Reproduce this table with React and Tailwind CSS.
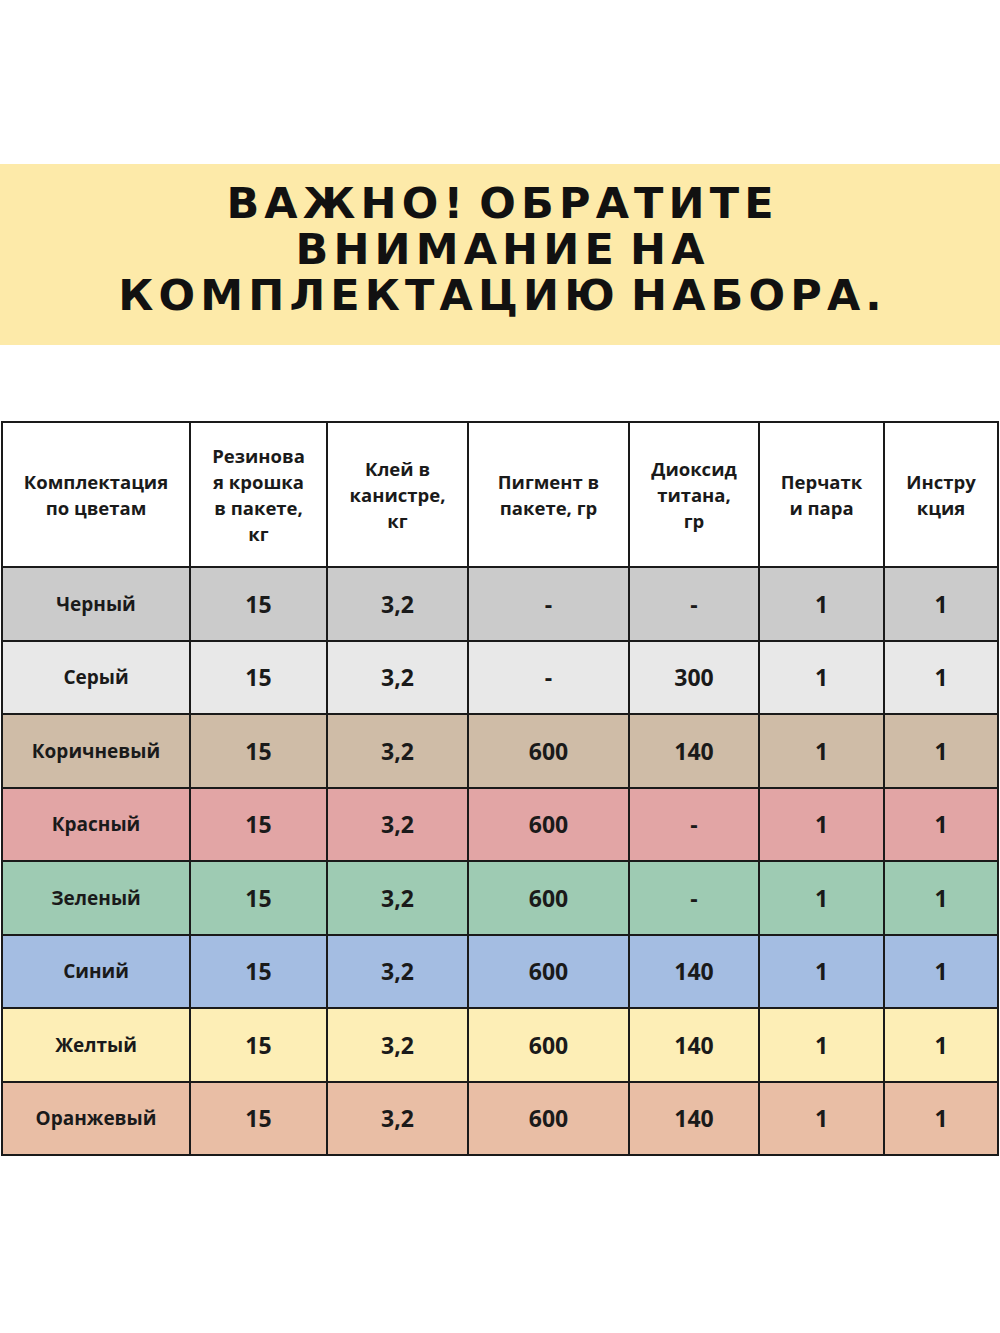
import React from "react";

const rows = [
  { name: "Черный", bg: "bg-[#cbcbcb]", v: ["15", "3,2", "-", "-", "1", "1"] },
  { name: "Серый", bg: "bg-[#e8e8e8]", v: ["15", "3,2", "-", "300", "1", "1"] },
  { name: "Коричневый", bg: "bg-[#cfbca7]", v: ["15", "3,2", "600", "140", "1", "1"] },
  { name: "Красный", bg: "bg-[#e2a5a5]", v: ["15", "3,2", "600", "-", "1", "1"] },
  { name: "Зеленый", bg: "bg-[#9ecbb3]", v: ["15", "3,2", "600", "-", "1", "1"] },
  { name: "Синий", bg: "bg-[#a4bde2]", v: ["15", "3,2", "600", "140", "1", "1"] },
  { name: "Желтый", bg: "bg-[#fdeeb6]", v: ["15", "3,2", "600", "140", "1", "1"] },
  { name: "Оранжевый", bg: "bg-[#e9bea5]", v: ["15", "3,2", "600", "140", "1", "1"] },
];

const headers = [
  ["Комплектация", "по цветам"],
  ["Резинова", "я крошка", "в пакете,", "кг"],
  ["Клей в", "канистре,", "кг"],
  ["Пигмент в", "пакете, гр"],
  ["Диоксид", "титана,", "гр"],
  ["Перчатк", "и пара"],
  ["Инстру", "кция"],
];

const widths = ["w-[188px]", "w-[137px]", "w-[141px]", "w-[161px]", "w-[130px]", "w-[125px]", "w-[114px]"];

export default function App() {
  return (
    <div className="w-[1000px] h-[1333px] bg-white" style={{ fontFamily: '"Open Sans", "Noto Sans", sans-serif' }}>
      <div className="h-[164px]" />
      <div className="h-[181px] bg-[#fdeaa9] flex flex-col items-center justify-center pb-[12px]">
        <div
          className="text-[43px] leading-[46px] font-bold text-[#111] tracking-[0.12em] [word-spacing:-9px] text-center uppercase pl-[0.12em]"
          style={{ fontFamily: '"DejaVu Sans", sans-serif' }}
        >
          <div>ВАЖНО! ОБРАТИТЕ</div>
          <div>ВНИМАНИЕ НА</div>
          <div>КОМПЛЕКТАЦИЮ НАБОРА.</div>
        </div>
      </div>
      <div className="h-[76px]" />
      <table className="ml-[1px] w-[998px] border-collapse table-fixed text-[#1a1a1a]">
        <colgroup>
          {widths.map((w, i) => (
            <col key={i} className={w} />
          ))}
        </colgroup>
        <thead>
          <tr className="h-[145px] bg-white">
            {headers.map((h, i) => (
              <th key={i} className="border-2 border-[#1a1a1a] text-[18.5px] leading-[26px] font-bold text-center align-middle px-0">
                {h.map((l, j) => (
                  <div key={j} className="whitespace-nowrap">{l}</div>
                ))}
              </th>
            ))}
          </tr>
        </thead>
        <tbody>
          {rows.map((r, i) => (
            <tr key={i} className={`h-[73.5px] ${r.bg}`}>
              <td className="border-2 border-[#1a1a1a] text-[19px] font-bold text-center align-middle">{r.name}</td>
              {r.v.map((v, j) => (
                <td key={j} className="border-2 border-[#1a1a1a] text-[23px] font-bold text-center align-middle">
                  {v}
                </td>
              ))}
            </tr>
          ))}
        </tbody>
      </table>
    </div>
  );
}
